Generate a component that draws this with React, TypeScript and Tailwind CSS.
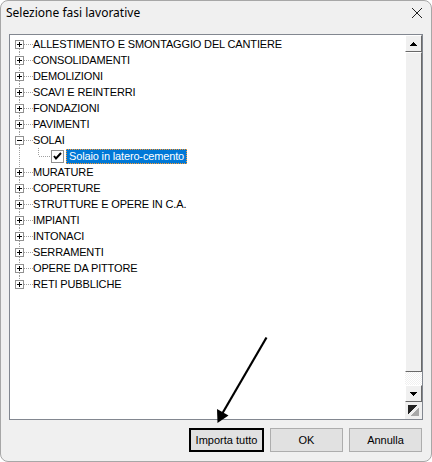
import React from 'react';

const items = [
  'ALLESTIMENTO E SMONTAGGIO DEL CANTIERE',
  'CONSOLIDAMENTI',
  'DEMOLIZIONI',
  'SCAVI E REINTERRI',
  'FONDAZIONI',
  'PAVIMENTI',
  'SOLAI',
  'MURATURE',
  'COPERTURE',
  'STRUTTURE E OPERE IN C.A.',
  'IMPIANTI',
  'INTONACI',
  'SERRAMENTI',
  'OPERE DA PITTORE',
  'RETI PUBBLICHE',
];

const dot = '#a0a0a0';

function Branch({ first, last, open }: { first: boolean; last: boolean; open: boolean }) {
  return (
    <svg width="18" height="16" viewBox="0 0 18 16" shapeRendering="crispEdges" className="shrink-0">
      {!first && <line x1="4.5" y1="0" x2="4.5" y2="4" stroke={dot} strokeDasharray="1 1" />}
      {!last && <line x1="4.5" y1="13" x2="4.5" y2="16" stroke={dot} strokeDasharray="1 1" />}
      <line x1="9" y1="8.5" x2="18" y2="8.5" stroke={dot} strokeDasharray="1 1" />
      <rect x="0.5" y="4.5" width="8" height="8" fill="#fff" stroke="#919191" />
      <line x1="2" y1="8.5" x2="7" y2="8.5" stroke="#000" />
      {!open && <line x1="4.5" y1="6" x2="4.5" y2="11" stroke="#000" />}
    </svg>
  );
}

function ScrollButton({ down }: { down?: boolean }) {
  return (
    <div className="h-[17px] w-[17px] bg-[#f0f0f0] border border-t-white border-l-white border-r-[#696969] border-b-[#696969] flex items-center justify-center">
      <svg width="7" height="4" viewBox="0 0 7 4" shapeRendering="crispEdges">
        {down ? <polygon points="0,0 7,0 3.5,4" fill="#000" /> : <polygon points="3.5,0 7,4 0,4" fill="#000" />}
      </svg>
    </div>
  );
}

export default function App() {
  return (
    <div
      className="relative w-[432px] h-[462px] bg-[#f0f0f0] border border-[#a7a7a7] rounded-lg overflow-hidden flex flex-col"
      style={{ fontFamily: '"Liberation Sans", Arial, sans-serif' }}
    >
      {/* Title bar */}
      <div className="h-[33px] flex items-start justify-between pl-[5px] pr-[8px] pt-[4px]">
        <span className="text-[12px] text-black leading-[16px]" style={{ fontFamily: '"Noto Sans", sans-serif' }}>
          Selezione fasi lavorative
        </span>
        <svg width="12" height="12" viewBox="0 0 12 12" className="mt-[2px]">
          <path d="M1 1 L11 11 M11 1 L1 11" stroke="#222" strokeWidth="1" />
        </svg>
      </div>

      {/* Tree box */}
      <div className="mx-[8px] h-[386px] border border-[#828790] bg-white flex">
        <div className="flex-1 pt-[1px] pl-[5px] text-[11px] text-black tracking-[-0.15px]">
          {items.map((label, i) => (
            <React.Fragment key={label}>
              <div className="h-[16px] flex items-center">
                <Branch first={i === 0} last={i === items.length - 1} open={label === 'SOLAI'} />
                <span className="leading-[16px]">{label}</span>
              </div>
              {label === 'SOLAI' && (
                <div className="h-[16px] flex items-center">
                  <svg width="22" height="16" viewBox="0 0 22 16" shapeRendering="crispEdges" className="shrink-0">
                    <line x1="4.5" y1="0" x2="4.5" y2="16" stroke={dot} strokeDasharray="1 1" />
                  </svg>
                  <svg width="14" height="16" viewBox="0 0 14 16" shapeRendering="crispEdges" className="shrink-0">
                    <line x1="1.5" y1="0" x2="1.5" y2="8" stroke={dot} strokeDasharray="1 1" />
                    <line x1="2" y1="8.5" x2="14" y2="8.5" stroke={dot} strokeDasharray="1 1" />
                  </svg>
                  <svg width="13" height="13" viewBox="0 0 13 13" shapeRendering="crispEdges" className="shrink-0">
                    <rect x="0.5" y="0.5" width="12" height="12" fill="#fff" stroke="#8f8f8f" />
                    <path d="M3 6 L5 8.5 L10 3" fill="none" stroke="#000" strokeWidth="2" shapeRendering="auto" />
                  </svg>
                  <span className="ml-[2px] h-[15px] px-[2px] bg-[#0078d7] text-white leading-[13px] border border-dotted border-[#ff9a2e]">
                    Solaio in latero-cemento
                  </span>
                </div>
              )}
            </React.Fragment>
          ))}
        </div>

        {/* Scrollbar */}
        <div className="w-[17px] flex flex-col">
          <ScrollButton />
          <div className="flex-1 flex flex-col bg-[repeating-conic-gradient(#f0f0f0_0_25%,#ffffff_0_50%)] bg-[length:2px_2px]">
            <div className="h-[320px] bg-[#f0f0f0] border border-t-white border-l-white border-r-[#696969] border-b-[#696969]" />
          </div>
          <ScrollButton down />
          <div className="h-[17px] w-[17px] bg-[#f0f0f0] flex items-center justify-center">
            <svg width="13" height="13" viewBox="0 0 13 13" shapeRendering="crispEdges">
              <polygon points="1,1 10,1 1,10" fill="#222" />
              <polygon points="12,3 12,12 3,12" fill="#a8a8a8" />
            </svg>
          </div>
        </div>
      </div>

      {/* Buttons */}
      <div className="mt-[8px] flex justify-end gap-[6px] pr-[9px] text-[11px] text-black">
        <button className="w-[75px] h-[24px] bg-[#e1e1e1] border-2 border-black">Importa tutto</button>
        <button className="w-[73px] h-[24px] bg-[#e1e1e1] border border-[#adadad]">OK</button>
        <button className="w-[73px] h-[24px] bg-[#e1e1e1] border border-[#adadad]">Annulla</button>
      </div>

      {/* Annotation arrow */}
      <svg className="absolute left-0 top-0 pointer-events-none" width="432" height="462" viewBox="0 0 432 462">
        <line x1="265.5" y1="336.5" x2="221" y2="413" stroke="#000" strokeWidth="2.2" />
        <polygon points="216.5,422 216,408 227.5,414.5" fill="#000" />
      </svg>
    </div>
  );
}
